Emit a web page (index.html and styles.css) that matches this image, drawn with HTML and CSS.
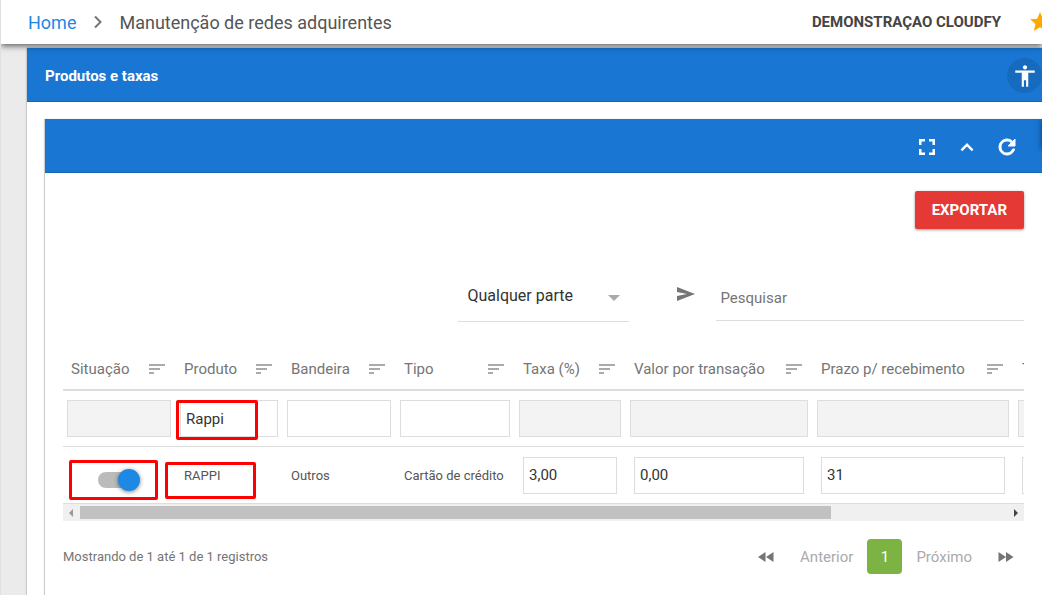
FILE: index.html
```
<!DOCTYPE html>
<html lang="pt-BR">
<head>
    <meta charset="UTF-8">
    <meta name="viewport" content="width=device-width, initial-scale=1.0">
    <title>Manutenção de redes adquirentes</title>
    <link rel="stylesheet" href="styles.css">
</head>
<body>
    <header class="topbar">
        <nav class="breadcrumb">
            <a href="#">Home</a>
            <svg class="crumb-arrow" viewBox="0 0 8 14"><path d="M1 1.5 6.5 7 1 12.5"/></svg>
            <span>Manutenção de redes adquirentes</span>
        </nav>
        <div class="account">
            <span class="company">DEMONSTRAÇAO CLOUDFY</span>
            <svg class="star" viewBox="0 0 24 24"><path d="M12 17.27 18.18 21l-1.64-7.03L22 9.24l-7.19-.61L12 2 9.19 8.63 2 9.24l5.46 4.73L5.82 21z"/></svg>
        </div>
    </header>

    <main class="card">
        <div class="card-header">
            <h1>Produtos e taxas</h1>
            <button class="access" type="button" aria-label="Acessibilidade">
                <svg viewBox="0 0 24 24"><path d="M12 2c1.1 0 2 .9 2 2s-.9 2-2 2-2-.9-2-2 .9-2 2-2zm9 7h-6v13h-2v-6h-2v6H9V9H3V7h18v2z"/></svg>
            </button>
        </div>

        <section class="panel">
            <div class="panel-header">
                <button type="button" aria-label="Tela cheia">
                    <svg viewBox="0 0 24 24"><path d="M6 14H4v6h6v-2.5H6.500V14zM4 10h2.500V6.500H10V4H4v6zm13.500 7.500H14V20h6v-6h-2.500v3.500zM14 4v2.500h3.500V10H20V4h-6z"/></svg>
                </button>
                <button type="button" aria-label="Recolher">
                    <svg viewBox="0 0 24 24"><path d="M12 8l-6.500 6.500L7.200 16.200l4.800-4.700 4.800 4.700 1.700-1.700z"/></svg>
                </button>
                <button type="button" aria-label="Atualizar">
                    <svg class="refresh" viewBox="0 0 24 24"><path d="M17.65 6.35C16.2 4.9 14.21 4 12 4c-4.42 0-7.99 3.58-7.99 8s3.570 8 7.990 8c3.730 0 6.840-2.550 7.730-6h-2.080c-.82 2.330-3.040 4-5.650 4-3.310 0-6-2.690-6-6s2.690-6 6-6c1.660 0 3.140.69 4.220 1.780L13 11h7V4l-2.350 2.350z"/></svg>
                </button>
                <span class="side-tab"></span>
            </div>

            <div class="panel-body">
                <div class="actions">
                    <button class="export" type="button">EXPORTAR</button>
                </div>

                <form class="search">
                    <div class="select-box">
                        <select aria-label="Tipo de pesquisa">
                            <option>Qualquer parte</option>
                            <option>Início</option>
                        </select>
                    </div>
                    <button class="send" type="button" aria-label="Enviar">
                        <svg viewBox="0 0 18 14"><path d="M0 0 18 7 0 14V9l10-2L0 5z"/></svg>
                    </button>
                    <input class="search-input" type="text" placeholder="Pesquisar" aria-label="Pesquisar">
                </form>

                <div class="table-wrap">
                    <table>
                        <colgroup>
                            <col class="c-status"><col class="c-product"><col class="c-brand"><col class="c-type">
                            <col class="c-rate"><col class="c-value"><col class="c-term"><col class="c-last">
                        </colgroup>
                        <thead>
                            <tr class="titles">
                                <th><div class="th">Situação <i class="sort"></i></div></th>
                                <th><div class="th">Produto <i class="sort"></i></div></th>
                                <th><div class="th">Bandeira <i class="sort"></i></div></th>
                                <th><div class="th">Tipo <i class="sort"></i></div></th>
                                <th><div class="th">Taxa (%) <i class="sort"></i></div></th>
                                <th><div class="th">Valor por transação <i class="sort"></i></div></th>
                                <th><div class="th">Prazo p/ recebimento <i class="sort"></i></div></th>
                                <th><div class="th">T</div></th>
                            </tr>
                            <tr class="filters">
                                <td><input type="text" aria-label="Filtrar situação" disabled></td>
                                <td><input type="text" aria-label="Filtrar produto" value="Rappi"><span class="mark mark-filter"></span></td>
                                <td><input type="text" aria-label="Filtrar bandeira"></td>
                                <td><input type="text" aria-label="Filtrar tipo"></td>
                                <td><input type="text" aria-label="Filtrar taxa" disabled></td>
                                <td><input type="text" aria-label="Filtrar valor" disabled></td>
                                <td><input type="text" aria-label="Filtrar prazo" disabled></td>
                                <td><input type="text" aria-label="Filtrar" disabled></td>
                            </tr>
                        </thead>
                        <tbody>
                            <tr class="record">
                                <td><input class="switch" type="checkbox" aria-label="Situação" checked><span class="mark mark-status"></span></td>
                                <td>RAPPI<span class="mark mark-name"></span></td>
                                <td>Outros</td>
                                <td>Cartão de crédito</td>
                                <td><input type="text" aria-label="Taxa (%)" value="3,00"></td>
                                <td><input type="text" aria-label="Valor por transação" value="0,00"></td>
                                <td><input type="text" aria-label="Prazo p/ recebimento" value="31"></td>
                                <td><input type="text" aria-label="Valor"></td>
                            </tr>
                        </tbody>
                    </table>
                </div>
                <div class="scrollbar">
                    <svg class="arrow-left" viewBox="0 0 4 8"><path d="M4 0v8L0 4z"/></svg>
                    <div class="track"><div class="thumb"></div></div>
                    <svg class="arrow-right" viewBox="0 0 4 8"><path d="M0 0v8l4-4z"/></svg>
                </div>

                <div class="table-footer">
                    <span class="info">Mostrando de 1 até 1 de 1 registros</span>
                    <nav class="pages">
                        <button type="button" aria-label="Primeira"><svg viewBox="0 0 16 10"><path d="M7.500 0v10L0 5zM15.500 0v10L8 5z"/></svg></button>
                        <button type="button">Anterior</button>
                        <button class="current" type="button">1</button>
                        <button type="button">Próximo</button>
                        <button type="button" aria-label="Última"><svg viewBox="0 0 16 10"><path d="M.5 0v10L8 5zM8 0v10l7.500-5z"/></svg></button>
                    </nav>
                </div>
            </div>
        </section>
    </main>
</body>
</html>
```
FILE: styles.css
```
*{
    box-sizing: border-box;
}
body{
    margin: 0;
    min-height: 100vh;
    display: flex;
    flex-direction: column;
    background-color: #ebebeb;
    border-left: 1px solid #e0e0e0;
    font-family: Roboto, "Liberation Sans", sans-serif;
    font-size: 13px;
    color: #555;
    overflow-x: hidden;
}
button{
    font-family: inherit;
    border: none;
    background: none;
    padding: 0;
    cursor: pointer;
}
input, select{
    font-family: inherit;
    color: #333;
}
svg{
    display: block;
    fill: currentColor;
}

/* top bar */
.topbar{
    position: relative;
    z-index: 2;
    display: flex;
    justify-content: space-between;
    align-items: center;
    height: 44px;
    padding-left: 27px;
    overflow: hidden;
    background-color: white;
    box-shadow: 0 2px 6px rgba(0, 0, 0, 0.6);
}
.breadcrumb{
    display: flex;
    align-items: center;
    font-size: 18px;
}
.breadcrumb a{
    color: #1e88e5;
    text-decoration: none;
}
.crumb-arrow{
    width: 8px;
    height: 14px;
    margin: 0 17px 0 18px;
    fill: none;
    stroke: #757575;
    stroke-width: 2;
}
.account{
    display: flex;
    align-items: center;
    gap: 27px;
    margin-right: -10px;
}
.company{
    font-size: 15px;
    font-weight: 700;
    color: #444;
}
.star{
    width: 24px;
    height: 24px;
    color: #ffa900;
}

/* outer card */
.card{
    flex: 1;
    display: flex;
    flex-direction: column;
    margin: 4px 0 0 26px;
    background-color: white;
    box-shadow: 0 0 2px rgba(0, 0, 0, 0.4);
}
.card-header, .panel-header{
    display: flex;
    align-items: center;
    height: 54px;
    padding-top: 2px;
    background-color: #1976d2;
    border-bottom: 1px solid #1666b8;
    color: white;
}
.card-header{
    justify-content: space-between;
    padding-left: 18px;
}
.card-header h1{
    margin: 0;
    font-size: 15px;
    font-weight: 700;
}
.access{
    display: flex;
    align-items: center;
    justify-content: center;
    width: 35px;
    height: 35px;
    border-radius: 50%;
    background-color: #176bbf;
    color: white;
}
.access svg{
    width: 26px;
    height: 26px;
}

/* inner panel */
.panel{
    flex: 1;
    margin: 17px 0 0 18px;
    box-shadow: -1px 0 1px rgba(0, 0, 0, 0.2);
}
.panel-header{
    position: relative;
    justify-content: flex-end;
    gap: 16px;
    padding-right: 23px;
    overflow: hidden;
}
.panel-header button{
    color: white;
}
.panel-header svg{
    width: 24px;
    height: 24px;
}
.panel-header .refresh{
    stroke: currentColor;
    stroke-width: 1;
}
/* shadow of the tab hidden past the right edge */
.side-tab{
    position: absolute;
    left: 100%;
    top: 0;
    width: 40px;
    height: 30px;
    box-shadow: 0 0 6px rgba(0, 0, 0, 0.5);
}
.panel-body{
    padding: 18px 18px 20px;
}
.actions{
    display: flex;
    justify-content: flex-end;
}
.export{
    height: 38px;
    padding: 0 17px;
    border-radius: 2px;
    background-color: #e53935;
    box-shadow: 0 1px 3px rgba(0, 0, 0, 0.4);
    color: white;
    font-size: 15px;
    font-weight: 700;
}

/* search */
.search{
    display: flex;
    justify-content: flex-end;
    align-items: flex-start;
    margin-top: 41px;
}
.select-box{
    position: relative;
    width: 171px;
    border-bottom: 1px solid #ddd;
}
.select-box::after{
    content: "";
    position: absolute;
    right: 9px;
    top: 25px;
    border: 6px solid transparent;
    border-top-color: #aaa;
    border-bottom: none;
    pointer-events: none;
}
.select-box select{
    appearance: none;
    width: 100%;
    height: 51px;
    padding: 0 9px;
    border: none;
    background: none;
    font-size: 16px;
}
.send{
    margin: 17px 21px 0 48px;
    color: #757575;
}
.send svg{
    width: 18px;
    height: 14px;
}
.search-input{
    width: 32%;
    height: 51px;
    padding: 5px 4px 0;
    border: none;
    border-bottom: 1px solid #ddd;
    background: none;
    font-size: 15px;
}
.search-input::placeholder{
    color: #757575;
}

/* table */
.table-wrap{
    margin-top: 28px;
    overflow: hidden;
}
table{
    table-layout: fixed;
    width: 1190px;
    border-collapse: separate;
    border-spacing: 0;
}
.c-status, .c-brand{
    width: 113px;
}
.c-product{
    width: 107px;
}
.c-type{
    width: 119px;
}
.c-rate{
    width: 111px;
}
.c-value{
    width: 187px;
}
.c-term{
    width: 201px;
}
th, td{
    padding: 0 9px 0 8px;
    text-align: left;
    border-bottom: 1px solid #ddd;
}
th{
    height: 41px;
    padding-bottom: 2px;
    border-bottom-width: 2px;
    font-size: 15px;
    font-weight: 400;
    color: #757575;
}
.th{
    display: flex;
    justify-content: space-between;
    align-items: center;
    padding-right: 2px;
    white-space: nowrap;
}
.sort{
    width: 16px;
    height: 10px;
    background:
        linear-gradient(#aaa, #aaa) 0 0 / 16px 2px no-repeat,
        linear-gradient(#aaa, #aaa) 0 4px / 11px 2px no-repeat,
        linear-gradient(#aaa, #aaa) 0 8px / 5px 2px no-repeat;
}
td{
    position: relative;
    height: 57px;
}
.filters td{
    height: 56px;
    padding: 0 5px 0 4px;
}
td input[type="text"]{
    display: block;
    width: 100%;
    height: 37px;
    padding: 0 5px;
    border: 1px solid #ddd;
    border-radius: 0;
    background-color: white;
    font-size: 15px;
}
td input[type="text"]:disabled{
    background-color: #f3f3f3;
}
.switch{
    appearance: none;
    position: relative;
    display: block;
    width: 38px;
    height: 16px;
    margin: 10px 0 0 27px;
    border-radius: 8px;
    background-color: #bbb;
}
.switch::after{
    content: "";
    position: absolute;
    top: -3px;
    left: 20px;
    width: 22px;
    height: 22px;
    border-radius: 50%;
    background-color: #1e88e5;
    box-shadow: 0 1px 4px rgba(0, 0, 0, 0.5);
}

/* red highlight boxes */
.mark{
    position: absolute;
    z-index: 1;
    border: 3px solid red;
    border-radius: 2px;
    pointer-events: none;
}
.mark-filter{
    left: 0;
    top: 9px;
    width: 82px;
    height: 40px;
}
.mark-status{
    left: 6px;
    top: 13px;
    width: 89px;
    height: 40px;
}
.mark-name{
    left: -11px;
    top: 15px;
    width: 91px;
    height: 37px;
}

/* horizontal scrollbar */
.scrollbar{
    display: flex;
    align-items: center;
    gap: 7px;
    height: 17px;
    padding: 0 6px;
    background-color: #f0f0f0;
}
.scrollbar svg{
    width: 4px;
    height: 8px;
}
.arrow-left{
    color: #999;
}
.arrow-right{
    color: #444;
}
.track{
    flex: 1;
}
.thumb{
    width: 81%;
    height: 13px;
    background-color: #c1c1c1;
}

/* footer */
.table-footer{
    display: flex;
    justify-content: space-between;
    align-items: center;
    margin-top: 18px;
}
.info{
    color: #757575;
}
.pages{
    display: flex;
    align-items: center;
    padding-right: 10px;
}
.pages button{
    height: 35px;
    padding: 0 14px;
    font-size: 15px;
    color: #aaa;
}
.pages .current{
    width: 35px;
    padding: 0;
    border-radius: 4px;
    background-color: #7cb342;
    color: white;
}
.pages svg{
    width: 16px;
    height: 10px;
    color: #757575;
}
.pages button:first-child{
    padding: 0 12px 0 0;
}
.pages button:last-child{
    padding: 0 0 0 12px;
}
```
